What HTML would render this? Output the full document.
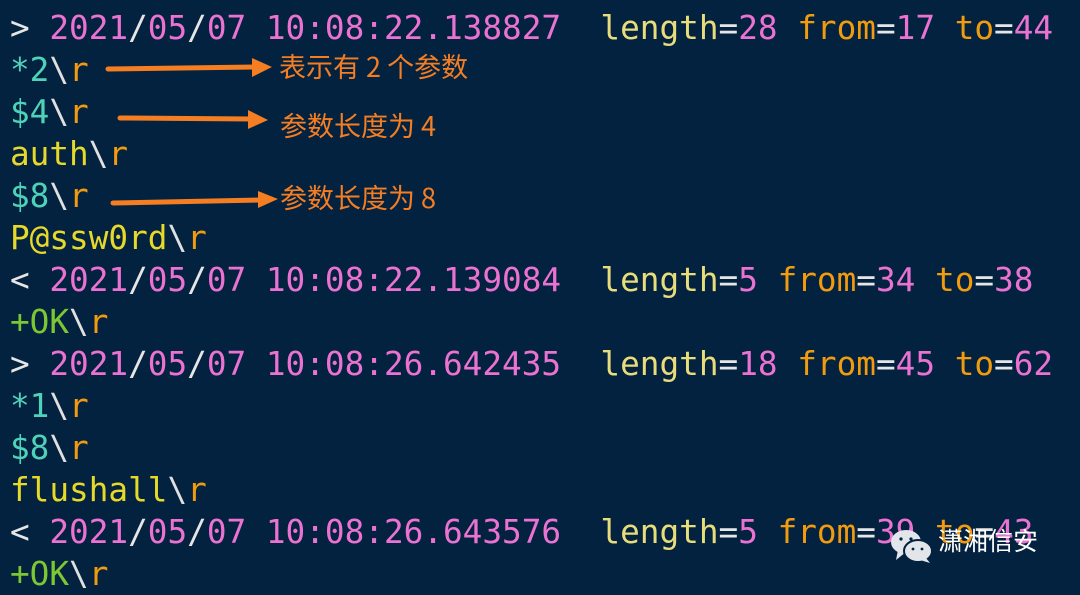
<!DOCTYPE html>
<html><head><meta charset="utf-8"><style>
body{margin:0;width:1080px;height:594px;background:#03223f;overflow:hidden;position:relative}
pre{position:absolute;left:10px;top:7px;margin:0;font-family:"DejaVu Sans Mono","Liberation Mono",monospace;font-size:32.7px;line-height:42px;color:#e8e8e8}
.p{color:#ec72d2}.w{color:#e6e6e6}.y{color:#e8dd7a}.o{color:#f29b0f}.t{color:#4fd3b8}.Y{color:#e6d92a}.g{color:#7cc832}.s{color:#e0e0e0}
.lab{position:absolute;font-family:"Noto Sans CJK SC",sans-serif;font-size:27px;color:#f57d22;line-height:1;white-space:pre}
.wm{position:absolute;left:938px;top:528px;font-family:"Noto Sans CJK SC",sans-serif;font-size:25px;color:#fff;line-height:1}
</style></head><body>
<pre><span class="w">&gt;</span> <span class="p">2021</span><span class="w">/</span><span class="p">05</span><span class="w">/</span><span class="p">07 10:08:22.138827</span>  <span class="y">length</span><span class="w">=</span><span class="p">28</span> <span class="o">from</span><span class="w">=</span><span class="p">17</span> <span class="o">to</span><span class="w">=</span><span class="p">44</span>
<span class="t">*2</span><span class="s">\</span><span class="o">r</span>
<span class="t">$4</span><span class="s">\</span><span class="o">r</span>
<span class="Y">auth</span><span class="s">\</span><span class="o">r</span>
<span class="t">$8</span><span class="s">\</span><span class="o">r</span>
<span class="Y">P@ssw0rd</span><span class="s">\</span><span class="o">r</span>
<span class="w">&lt;</span> <span class="p">2021</span><span class="w">/</span><span class="p">05</span><span class="w">/</span><span class="p">07 10:08:22.139084</span>  <span class="y">length</span><span class="w">=</span><span class="p">5</span> <span class="o">from</span><span class="w">=</span><span class="p">34</span> <span class="o">to</span><span class="w">=</span><span class="p">38</span>
<span class="g">+OK</span><span class="s">\</span><span class="o">r</span>
<span class="w">&gt;</span> <span class="p">2021</span><span class="w">/</span><span class="p">05</span><span class="w">/</span><span class="p">07 10:08:26.642435</span>  <span class="y">length</span><span class="w">=</span><span class="p">18</span> <span class="o">from</span><span class="w">=</span><span class="p">45</span> <span class="o">to</span><span class="w">=</span><span class="p">62</span>
<span class="t">*1</span><span class="s">\</span><span class="o">r</span>
<span class="t">$8</span><span class="s">\</span><span class="o">r</span>
<span class="Y">flushall</span><span class="s">\</span><span class="o">r</span>
<span class="w">&lt;</span> <span class="p">2021</span><span class="w">/</span><span class="p">05</span><span class="w">/</span><span class="p">07 10:08:26.643576</span>  <span class="y">length</span><span class="w">=</span><span class="p">5</span> <span class="o">from</span><span class="w">=</span><span class="p">39</span> <span class="o">to</span><span class="w">=</span><span class="p">43</span>
<span class="g">+OK</span><span class="s">\</span><span class="o">r</span></pre>
<svg style="position:absolute;left:0;top:0" width="1080" height="594">
<g stroke="#f57d22" stroke-width="5" stroke-linecap="round" fill="#f57d22">
<line x1="108" y1="69" x2="255" y2="67"/><polygon stroke="none" points="252,58 272,67 252,77"/>
<line x1="120" y1="118" x2="252" y2="119"/><polygon stroke="none" points="248,110 268,120 248,129"/>
<line x1="113" y1="203" x2="262" y2="200"/><polygon stroke="none" points="258,191 278,199 258,208"/>
</g>
<g fill="#e2e6ea">
<ellipse cx="906" cy="542" rx="15" ry="12"/><polygon points="898,550 896,560 906,552"/>
<ellipse cx="918" cy="551" rx="14" ry="11" stroke="#03223f" stroke-width="2"/><polygon points="926,558 930,563 920,560"/>
</g>
<g fill="#03223f"><circle cx="901" cy="539" r="1.6"/><circle cx="911" cy="539" r="1.6"/><circle cx="913" cy="549" r="1.4"/><circle cx="922" cy="549" r="1.4"/></g>
</svg>
<div class="lab" style="left:279px;top:52px">表示有 2 个参数</div>
<div class="lab" style="left:280px;top:111px">参数长度为 4</div>
<div class="lab" style="left:280px;top:183px">参数长度为 8</div>
<div class="wm">潇湘信安</div>
</body></html>
